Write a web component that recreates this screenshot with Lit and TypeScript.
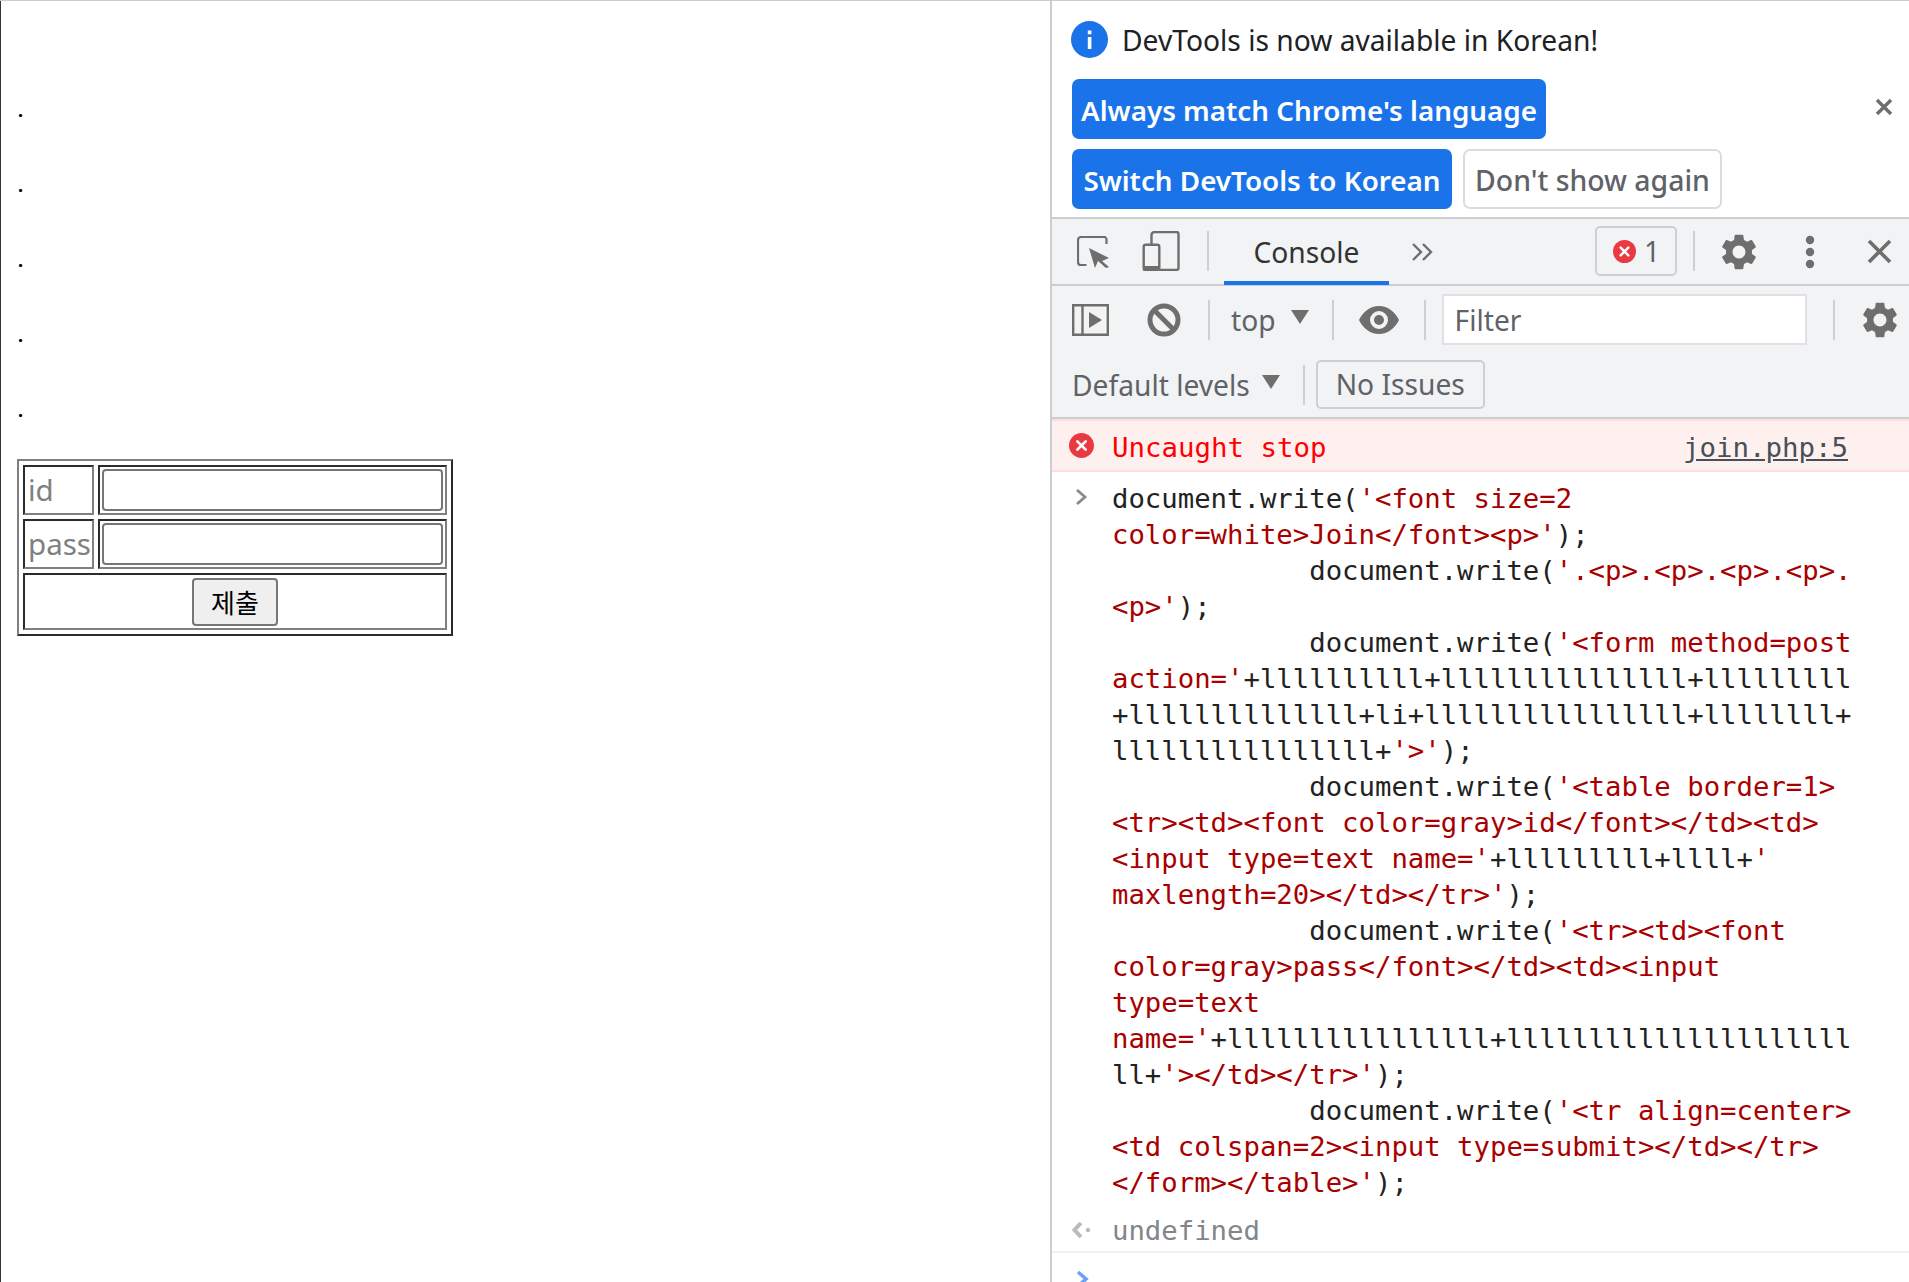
import { LitElement, html, css } from "lit";
import { customElement } from "lit/decorators.js";

const GEAR = "M19.14 12.94c.04-.3.06-.61.06-.94 0-.32-.02-.64-.07-.94l2.03-1.58c.18-.14.23-.41.12-.61l-1.92-3.32c-.12-.22-.37-.29-.59-.22l-2.39.96c-.5-.38-1.03-.7-1.62-.94l-.36-2.54c-.04-.24-.24-.41-.48-.41h-3.84c-.24 0-.43.17-.47.41l-.36 2.54c-.59.24-1.13.57-1.62.94l-2.39-.96c-.22-.08-.47 0-.59.22L2.74 8.87c-.12.21-.08.47.12.61l2.03 1.58c-.05.3-.09.63-.09.94s.02.64.07.94l-2.03 1.58c-.18.14-.23.41-.12.61l1.92 3.32c.12.22.37.29.59.22l2.39-.96c.5.38 1.03.7 1.62.94l.36 2.54c.05.24.24.41.48.41h3.84c.24 0 .44-.17.47-.41l.36-2.54c.59-.24 1.13-.56 1.62-.94l2.39.96c.22.08.47 0 .59-.22l1.92-3.32c.12-.22.07-.47-.12-.61l-2.01-1.58zM12 15.6c-1.98 0-3.6-1.62-3.6-3.6s1.62-3.6 3.6-3.6 3.6 1.62 3.6 3.6-1.62 3.6-3.6 3.6z";

const errIcon = () => html`<svg viewBox="0 0 24 24"><circle cx="12" cy="12" r="12" fill="#ea3a41"></circle><path d="M8 8l8 8M16 8l-8 8" stroke="#fff" stroke-width="2.6" stroke-linecap="round"></path></svg>`;

type Seg = [string, number];
const IND = "            ";
const L = (n: number) => "l".repeat(n);
const lines: Seg[][] = [
  [["document.write(", 0], ["'<font size=2", 1]],
  [["color=white>Join</font><p>'", 1], [");", 0]],
  [[IND + "document.write(", 0], ["'.<p>.<p>.<p>.<p>.", 1]],
  [["<p>'", 1], [");", 0]],
  [[IND + "document.write(", 0], ["'<form method=post", 1]],
  [["action='", 1], [`+${L(10)}+${L(15)}+${L(9)}`, 0]],
  [[`+${L(14)}+li+${L(16)}+${L(8)}+`, 0]],
  [[`${L(16)}+`, 0], ["'>'", 1], [");", 0]],
  [[IND + "document.write(", 0], ["'<table border=1>", 1]],
  [["<tr><td><font color=gray>id</font></td><td>", 1]],
  [["<input type=text name='", 1], ["+lllllllll+llll+", 0], ["'", 1]],
  [["maxlength=20></td></tr>'", 1], [");", 0]],
  [[IND + "document.write(", 0], ["'<tr><td><font", 1]],
  [["color=gray>pass</font></td><td><input", 1]],
  [["type=text", 1]],
  [["name='", 1], [`+${L(16)}+${L(21)}`, 0]],
  [["ll+", 0], ["'></td></tr>'", 1], [");", 0]],
  [[IND + "document.write(", 0], ["'<tr align=center>", 1]],
  [["<td colspan=2><input type=submit></td></tr>", 1]],
  [["</form></table>'", 1], [");", 0]],
];

@customElement("app-root")
export class AppRoot extends LitElement {
  static styles = css`
    :host { display: block; height: 1282px; overflow: hidden; background: #fff; }
    .page { display: flex; height: 1282px; border-top: 1px solid #ccc; box-sizing: border-box; }
    .left { width: 1050px; flex: none; box-sizing: border-box; border-left: 1px solid #333; padding: 94px 0 0 16px; }
    .dot { height: 75px; font-size: 18px; line-height: 30px; color: #000; padding-left: 1px; font-family: "Noto Sans", sans-serif; font-weight: 700; }
    table.form { margin-top: -11px; width: 436px; box-sizing: border-box; height: 177px; border-collapse: separate; border-spacing: 4px; border: 2px solid; border-color: #808080 #2b2b2b #2b2b2b #808080; }
    table.form td { border: 2px solid; border-color: #2b2b2b #808080 #808080 #2b2b2b; padding: 0; box-sizing: border-box; }
    .lbl { width: 71px; height: 50px; color: #808080; font: 400 29.5px/46px "Noto Sans", sans-serif; white-space: nowrap; padding-left: 3px !important; }
    .inp { padding: 2px !important; height: 50px; }
    .field { display: block; height: 42px; box-sizing: border-box; border: 2px solid #767676; border-radius: 4px; background: #fff; }
    .center { text-align: center; height: 57px; }
    .submit { display: inline-flex; align-items: center; justify-content: center; vertical-align: middle; width: 86px; height: 48px; box-sizing: border-box; background: #efefef; border: 2px solid #767676; border-radius: 4px; font: 26px/1 "Noto Sans CJK KR", sans-serif; color: #000; padding: 0; }

    .dev { flex: 1; min-width: 0; box-sizing: border-box; border-left: 2px solid #cbcdd1; font-family: "Noto Sans", sans-serif; font-size: 28.2px; color: #202124; }
    .info { height: 218px; box-sizing: border-box; padding: 19px 16px 0 19px; background: #fff; border-bottom: 2px solid #cbcdd1; display: flex; flex-direction: column; }
    .msg { display: flex; align-items: center; height: 38px; gap: 14px; white-space: nowrap; }
    .msg svg { width: 37px; height: 37px; flex: none; }
    .msg span { padding-top: 2px; }
    .acts { display: flex; margin-top: 21px; align-items: center; }
    .btnstack { display: flex; flex-direction: column; gap: 10px; flex: 1; }
    .row { display: flex; gap: 11px; }
    .btn { height: 60px; box-sizing: border-box; padding-top: 2px; border-radius: 7px; display: flex; align-items: center; justify-content: center; background: #1a73e8; color: #fff; white-space: nowrap; font-weight: 600; font-size: 27.8px; }
    .btn.a { width: 474px; margin-left: 1px; align-self: flex-start; }
    .btn.b { width: 380px; margin-left: 1px; }
    .btn.c { width: 259px; background: #fff; color: #5f6368; border: 2px solid #dadce0; font-weight: 500; font-size: 28.4px; }
    .x1 { width: 18px; height: 18px; flex: none; margin-bottom: 74px; }

    .tabs { height: 67px; box-sizing: border-box; background: #f1f3f4; border-bottom: 2px solid #cbcdd1; display: flex; align-items: flex-start; white-space: nowrap; }
    .sep { width: 2px; height: 40px; background: #cdcfd2; flex: none; }
    .tabs svg { flex: none; display: block; }
    .tab { width: 165px; height: 66px; box-sizing: border-box; border-bottom: 4px solid #1a73e8; text-align: center; line-height: 66px; flex: none; color: #333; }
    .badge { width: 82px; height: 50px; box-sizing: border-box; border: 2px solid #cdcfd2; border-radius: 5px; display: flex; align-items: center; gap: 8px; padding-left: 16px; color: #5f6368; flex: none; }
    .badge svg { width: 23px; height: 23px; }
    .tool { background: #f1f3f4; display: flex; align-items: center; height: 67px; white-space: nowrap; color: #5f6368; }
    .tool svg { flex: none; display: block; }
    .gear { width: 36px; height: 36px; }
    .tri { width: 18px; height: 14px; flex: none; margin-bottom: 6px; }
    .filter { width: 365px; height: 51px; box-sizing: border-box; background: #fff; border: 2px solid #dfe1e5; display: flex; align-items: center; padding: 1px 0 0 11px; flex: none; }
    .tool2 { background: #f1f3f4; height: 66px; box-sizing: border-box; display: flex; align-items: center; white-space: nowrap; color: #5f6368; padding-left: 20px; border-bottom: 2px solid #cbcdd1; }
    .noissue { width: 169px; height: 49px; box-sizing: border-box; border: 2px solid #cdcfd2; border-radius: 5px; display: flex; align-items: center; justify-content: center; margin: 0 0 2px 11px; }
    .err { height: 53px; box-sizing: border-box; background: #fff0f0; border-top: 2px solid #fdd; border-bottom: 2px solid #fdd; display: flex; align-items: center; padding: 4px 0 0 17px; font: 27.4px "DejaVu Sans Mono", monospace; color: #f00; }
    .err svg { width: 25px; height: 25px; flex: none; margin: 0 18px 4px 0; }
    .err .src { margin-left: auto; margin-right: 61px; color: #474f57; text-decoration: underline; }
    .code { font: 27.3px/36px "DejaVu Sans Mono", monospace; color: #222; padding: 9px 0 0 60px; position: relative; }
    .ln { white-space: pre; height: 36px; }
    .s { color: #a80000; }
    .prompt { position: absolute; left: 23px; top: 16px; width: 13px; height: 18px; }
    .undef { height: 44px; margin-top: 8px; display: flex; align-items: center; font: 27.3px "DejaVu Sans Mono", monospace; color: #80868b; border-bottom: 2px solid #f0f0f0; padding-left: 20px; box-sizing: border-box; }
    .undef svg { width: 20px; height: 18px; margin-right: 20px; flex: none; }
    .input { padding: 17px 0 0 24px; }
    .input svg { width: 13px; height: 18px; display: block; }
  `;

  render() {
    return html`<div class="page">
      <div class="left">
        ${[0, 1, 2, 3, 4].map(() => html`<div class="dot">.</div>`)}
        <table class="form">
          <tr><td class="lbl">id</td><td class="inp"><span class="field"></span></td></tr>
          <tr><td class="lbl">pass</td><td class="inp"><span class="field"></span></td></tr>
          <tr><td class="center" colspan="2"><button class="submit">제출</button></td></tr>
        </table>
      </div>
      <div class="dev">
        <div class="info">
          <div class="msg">
            <svg viewBox="0 0 37 37"><circle cx="18.5" cy="18.5" r="18.5" fill="#1a73e8"></circle><rect x="16.8" y="16" width="3.6" height="12" fill="#fff"></rect><rect x="16.8" y="9.5" width="3.6" height="3.8" fill="#fff"></rect></svg>
            <span>DevTools is now available in Korean!</span>
          </div>
          <div class="acts">
            <div class="btnstack">
              <div class="btn a">Always match Chrome's language</div>
              <div class="row"><div class="btn b">Switch DevTools to Korean</div><div class="btn c">Don't show again</div></div>
            </div>
            <svg class="x1" viewBox="0 0 18 18"><path d="M2 2l14 14M16 2L2 16" stroke="#6e6e6e" stroke-width="3.4"></path></svg>
          </div>
        </div>
        <div class="tabs">
          <svg viewBox="0 0 34 33" style="width:34px;height:33px;margin:17px 0 0 25px"><path d="M9.5 29H4a3 3 0 0 1-3-3V4a3 3 0 0 1 3-3h23a2.5 2.5 0 0 1 2.5 2.5V8" fill="none" stroke="#6e6e6e" stroke-width="2.2"></path><path d="M12 12l20 10-7 3 7 6-3 1-8-7-3 7z" fill="#6e6e6e"></path></svg>
          <svg viewBox="0 0 38 40" style="width:38px;height:40px;margin:12px 0 0 31px"><path d="M9.5 13V4a3 3 0 0 1 3-3h22a2 2 0 0 1 2 2v34a2 2 0 0 1-2 2H18" fill="none" stroke="#6e6e6e" stroke-width="2.4"></path><rect x="1.7" y="13.7" width="15.6" height="25" rx="2" fill="none" stroke="#6e6e6e" stroke-width="2.4"></rect><rect x="1" y="35" width="17" height="4.8" fill="#6e6e6e"></rect></svg>
          <div class="sep" style="margin:12px 0 0 27px"></div>
          <div class="tab" style="margin-left:15px">Console</div>
          <svg viewBox="0 0 23 20" style="width:23px;height:22px;margin:22px 0 0 22px"><path d="M2 2l8 8-8 8M12 2l8 8-8 8" fill="none" stroke="#6e6e6e" stroke-width="2.4"></path></svg>
          <div class="badge" style="margin:7px 0 0 161px">${errIcon()}<span>1</span></div>
          <div class="sep" style="margin:12px 0 0 16px"></div>
          <svg class="gear" viewBox="2.5 2 19 20" style="margin:15px 0 0 26px"><path fill="#6e6e6e" d=${GEAR}></path></svg>
          <svg viewBox="0 0 10 34" style="width:10px;height:34px;margin:16px 0 0 48px"><circle cx="5" cy="5" r="4.2" fill="#6e6e6e"></circle><circle cx="5" cy="17" r="4.2" fill="#6e6e6e"></circle><circle cx="5" cy="29" r="4.2" fill="#6e6e6e"></circle></svg>
          <svg viewBox="0 0 25 25" style="width:25px;height:25px;margin:20px 0 0 52px"><path d="M2 2l21 21M23 2L2 23" stroke="#6e6e6e" stroke-width="3.6"></path></svg>
        </div>
        <div class="tool">
          <svg viewBox="0 0 37 32" style="width:37px;height:32px;margin-left:20px"><path d="M1.2 1.2h34.6v29.6H1.2zM10.5 1v30" fill="none" stroke="#6e6e6e" stroke-width="2.4"></path><path d="M17 8l13 8-13 8z" fill="#6e6e6e"></path></svg>
          <svg viewBox="0 0 34 34" style="width:34px;height:34px;margin-left:38px"><circle cx="17" cy="17" r="14" fill="none" stroke="#6e6e6e" stroke-width="5"></circle><path d="M7 7l20 20" stroke="#6e6e6e" stroke-width="5"></path></svg>
          <div class="sep" style="margin-left:27px"></div>
          <span style="margin-left:21px">top</span>
          <svg class="tri" viewBox="0 0 18 14" style="margin-left:15px"><path d="M0 0h18L9 14z" fill="#6e6e6e"></path></svg>
          <div class="sep" style="margin-left:23px"></div>
          <svg viewBox="0 0 40 28" style="width:40px;height:28px;margin-left:25px"><path fill-rule="evenodd" d="M20 0C11 0 4 6 0 14c4 8 11 14 20 14s16-6 20-14C36 6 29 0 20 0zm0 23a9 9 0 1 1 0-18 9 9 0 0 1 0 18zm0-14a5 5 0 1 0 0 10 5 5 0 0 0 0-10z" fill="#6e6e6e"></path></svg>
          <div class="sep" style="margin-left:25px"></div>
          <div class="filter" style="margin-left:16px">Filter</div>
          <div class="sep" style="margin-left:26px"></div>
          <svg class="gear" viewBox="2.5 2 19 20" style="margin-left:27px"><path fill="#6e6e6e" d=${GEAR}></path></svg>
        </div>
        <div class="tool2">
          <span>Default levels</span>
          <svg class="tri" viewBox="0 0 18 14" style="margin-left:12px"><path d="M0 0h18L9 14z" fill="#6e6e6e"></path></svg>
          <div class="sep" style="margin-left:23px"></div>
          <div class="noissue">No Issues</div>
        </div>
        <div class="err">${errIcon()}<span>Uncaught stop</span><span class="src">join.php:5</span></div>
        <div class="code">
          <svg class="prompt" viewBox="0 0 13 18"><path d="M2 2l8 7-8 7" fill="none" stroke="#8a8a8a" stroke-width="2.8"></path></svg>
          ${lines.map((l) => html`<div class="ln">${l.map(([t, k]) => (k ? html`<span class="s">${t}</span>` : t))}</div>`)}
        </div>
        <div class="undef">
          <svg viewBox="0 0 20 18"><path d="M9 2L2.5 9l6.5 7" fill="none" stroke="#bbb" stroke-width="4"></path><circle cx="16" cy="9" r="2.2" fill="#bbb"></circle></svg>
          <span>undefined</span>
        </div>
        <div class="input"><svg viewBox="0 0 13 18"><path d="M2 2l8 7-8 7" fill="none" stroke="#6ea0f5" stroke-width="3.6"></path></svg></div>
      </div>
    </div>`;
  }
}
